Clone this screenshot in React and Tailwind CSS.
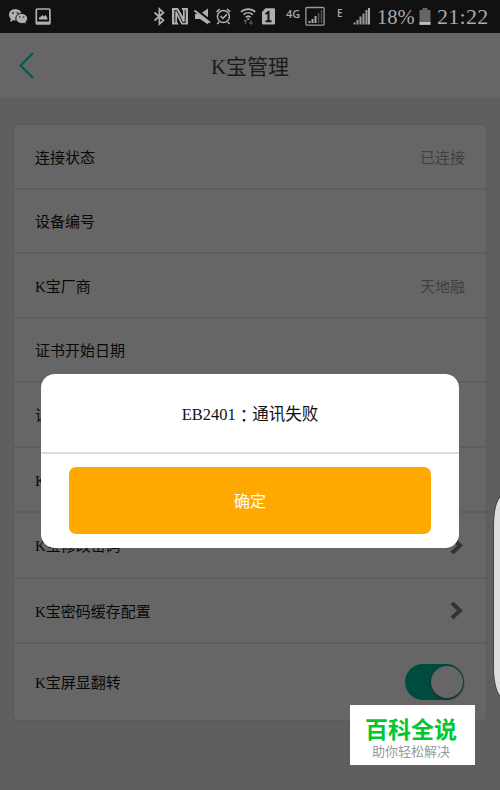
const rows = [
  { label: '连接状态', value: '已连接', height: 'h-[65px]' },
  { label: '设备编号', height: 'h-[64px]' },
  { label: 'K宝厂商', value: '天地融', height: 'h-[65px]' },
  { label: '证书开始日期', height: 'h-[64px]' },
  { label: '证书结束日期', height: 'h-[65px]' },
  { label: 'K宝检测', height: 'h-[65px]' },
  { label: 'K宝修改密码', arrow: true, height: 'h-[66px]' },
  { label: 'K宝密码缓存配置', arrow: true, height: 'h-[65px]' },
  { label: 'K宝屏显翻转', toggle: true, height: 'h-[76px]' },
];

function NoticeIcons() {
  return (
    <svg className="h-[33px] w-[44px]" viewBox="8 0 44 33" fill="none" stroke="#b0b0b0" aria-hidden>
      {/* chat */}
      <g stroke="none" fill="#b0b0b0">
        <ellipse cx="15.3" cy="14.7" rx="6.4" ry="5.8" />
        <path d="M11 18l-1 4 4-2z" />
        <ellipse cx="21.7" cy="18.5" rx="5.9" ry="5.1" stroke="#111" strokeWidth="1" />
        <path d="M23 22l2.5 1.7-.3-3z" />
      </g>
      <g stroke="none" fill="#222">
        <circle cx="13" cy="13" r=".9" />
        <circle cx="17.5" cy="13" r=".9" />
        <circle cx="19.7" cy="17" r=".8" />
        <circle cx="23.6" cy="17" r=".8" />
      </g>
      {/* picture */}
      <rect x="36.3" y="9" width="13.6" height="15" rx="1" strokeWidth="1.7" />
      <path d="M36 22.8h14" strokeWidth="2.4" />
      <path d="M39 19.5v-2l2-1 1.3-1.5 1.5 1.5 1.5-1.5 2 2.5v2z" fill="#b0b0b0" stroke="none" />
    </svg>
  );
}

function SystemIcons() {
  return (
    <svg className="h-[33px] w-[125px]" viewBox="152 0 125 33" fill="none" stroke="#b0b0b0" strokeWidth="1.6" aria-hidden>
      {/* bluetooth */}
      <path d="M154.5 12.5l9 7.8-4.1 3.8V9l4.1 3.7-9 7.8" strokeWidth="1.7" />
      {/* nfc */}
      <path d="M172 8h6l5 8.5V11l-1.500-3H188v16.500h-6.500L177 16v5.500l1.500 3H172z" fill="#b0b0b0" stroke="none" />
      <path d="M174.800 22.500V10.500h2l6 12h2.400V10" stroke="#151515" strokeWidth="1" />
      {/* muted speaker */}
      <path d="M195 14h5l8-5.500v16l-8-5.500h-5z" fill="#b0b0b0" stroke="none" />
      <path d="M196 9.500L212 22" stroke="#111" strokeWidth="2.400" />
      <path d="M194.500 10.500l15.500 12.200" strokeWidth="2" />
      {/* alarm */}
      <circle cx="223.4" cy="16.5" r="6" strokeWidth="1.5" />
      <path d="M216.5 12l3.2-3M230.2 12L227 9M219 22l-1.7 2M227.8 22l1.7 2" />
      <path d="M220.5 16l2.4 2.4 4-4" strokeWidth="1.5" />
      {/* wifi */}
      <path d="M241 11.9c4-3.8 10.5-3.8 14.2 0M243.5 14.7c2.8-2.6 6.7-2.6 9.3 0M245.8 17.4c1.4-1.4 3.4-1.4 4.8 0" strokeWidth="1.7" />
      <circle cx="248.2" cy="19" r="1.1" fill="#b0b0b0" stroke="none" />
      <path d="M245.5 24v-4m-1.5 1.5l1.5-1.6 1.5 1.6M251 20v4m-1.5-1.5l1.5 1.6 1.5-1.6" stroke="#555" strokeWidth="1.2" />
      {/* sim */}
      <path d="M265.5 8.2h8.5a1 1 0 011 1v14.300a1 1 0 01-1 1h-11a1 1 0 01-1-1V12z" fill="#b0b0b0" stroke="none" />
      <path d="M265.500 14l3-2v9.200m-3 0h6" stroke="#151515" strokeWidth="2" />
    </svg>
  );
}

function StatusBar() {
  return (
    <div className="flex h-[33px] items-center bg-[#111] pl-2 pr-[10px] text-[#aaa]">
      <NoticeIcons />
      <div className="ml-auto flex items-center">
        <SystemIcons />
        <span className="ml-[9px] w-[19px] pb-[7px] font-['Open_Sans',sans-serif] text-[11px] font-semibold leading-[11px]">4G</span>
        <svg className="h-[33px] w-5" viewBox="305 0 20 33" fill="none" aria-hidden>
          <rect x="305.900" y="7.500" width="18.200" height="17.600" rx="1" strokeWidth="1.300" stroke="#999" />
          <path d="M309.500 23v-2M312.500 23v-4M315.500 23v-7" strokeWidth="1.900" stroke="#b0b0b0" />
          <path d="M318.600 23V13M321.500 23V10" strokeWidth="1.500" stroke="#555" />
        </svg>
        <span className="ml-3 w-4 pb-[7px] font-['Open_Sans',sans-serif] text-[10px] font-semibold leading-[10px]">E</span>
        <svg className="h-[33px] w-[18px]" viewBox="353 0 18 33" fill="none" aria-hidden>
          <path d="M354.500 24.500v-2M357.500 24.500v-4.500M360.500 24.500v-8M363.500 24.500v-11M366.500 24.500V10" strokeWidth="2.100" stroke="#999" />
          <path d="M369 24.500V8" strokeWidth="2" stroke="#aaa" />
        </svg>
        <span className="ml-1.5 w-[42px] text-[20.5px] leading-[24px]">18%</span>
        <svg className="h-[33px] w-3" viewBox="419 0 12 33" aria-hidden>
          <path d="M419.500 10h3V8h5v2h3v14.800h-11z" fill="#666" />
          <path d="M419.500 22h11v2.800h-11z" fill="#c0c0c0" />
        </svg>
        <span className="ml-1.5 w-[53px] text-[22px] leading-[24px] tracking-[0.3px]">21:22</span>
      </div>
    </div>
  );
}

function Row({ label, value, arrow, toggle, height }) {
  return (
    <div className={`flex items-center justify-between border-b-2 border-[#5d5d5d] px-[21px] last:border-b-0 ${height}`}>
      <span className="pt-0.5 text-[15px] leading-5 text-[#080808]">{label}</span>
      {value && <span className="pt-0.5 text-[15px] leading-5 text-[#404040]">{value}</span>}
      {arrow && (
        <svg className="mr-px h-[19px] w-[14px]" viewBox="0 0 14 19" fill="none" aria-hidden>
          <path d="M2 2l8 7.500-8 7.500" stroke="#333" strokeWidth="4" />
        </svg>
      )}
      {toggle && (
        <span className="mr-px flex h-[36px] w-[59px] items-center justify-end rounded-full bg-[#004b3f] pr-px">
          <span className="h-[32px] w-[32px] rounded-full bg-[#666] shadow-[0_1px_3px_#222]" />
        </span>
      )}
    </div>
  );
}

function Dialog() {
  return (
    <div className="absolute inset-0 flex items-center justify-center pt-[132px]">
      <div className="h-[174px] w-[418px] overflow-hidden rounded-[14px] bg-white">
        <p className="flex h-[80px] items-center justify-center border-b-2 border-[#ddd] pt-1 text-[16.5px] text-[#111]">
          EB2401<span className="font-['Noto_Sans_CJK_TC',sans-serif]" lang="zh-TW">：</span>通讯失败
        </p>
        <div className="px-[28px] pt-[13px]">
          <button className="h-[67px] w-full rounded-[7px] bg-[#ffa800] pt-0.5 text-[16px] text-white">确定</button>
        </div>
      </div>
    </div>
  );
}

export default function App() {
  return (
    <div className="relative h-[790px] w-[500px] overflow-hidden bg-[#5f5f5f] font-['Liberation_Serif','Noto_Sans_CJK_SC',serif]">
      <StatusBar />
      <header className="grid h-[65px] grid-cols-[1fr_auto_1fr] items-center border-b border-[#626262] bg-[#666] px-[18px]">
        <svg className="h-[29px] w-[17px]" viewBox="0 0 17 29" fill="none" aria-hidden>
          <path d="M15 2L2.500 14.500 15 27" stroke="#005b4e" strokeWidth="2" />
        </svg>
        <h1 className="pt-[3px] text-[21px] leading-7 text-[#1a1a1a]">K宝管理</h1>
      </header>

      <main className="px-[14px] pt-[27px]">
        <div className="rounded-[4px] bg-[#666] shadow-[0_0_2px_#505050]">
          {rows.map((r) => (
            <Row key={r.label} {...r} />
          ))}
        </div>
      </main>

      <Dialog />

      {/* edge panel handle */}
      <div className="absolute -right-[10px] top-[495px] h-[203px] w-[17px] rounded-l-[10px_30px] border border-[#444] bg-[#ddd]" />

      <div className="absolute bottom-[25px] right-[25px] flex h-[60px] w-[125px] flex-col items-center bg-white pr-[3px] pt-2 font-['Noto_Sans_CJK_SC',sans-serif]">
        <span className="text-[23px] font-bold leading-[30px] text-[#00c72e]">百科全说</span>
        <span className="pt-px text-[13px] leading-[14px] text-[#999]">助你轻松解决</span>
      </div>
    </div>
  );
}
